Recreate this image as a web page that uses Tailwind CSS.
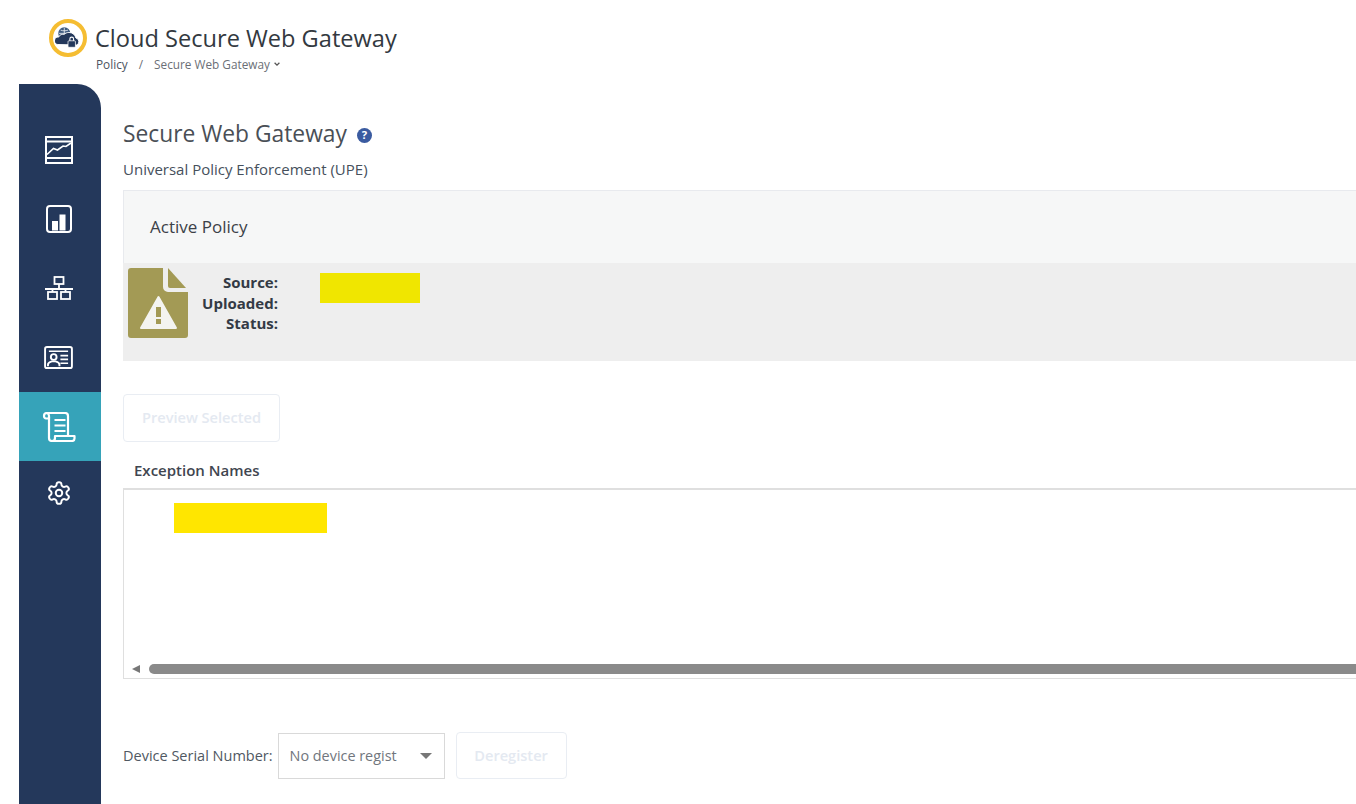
<!DOCTYPE html>
<html lang="en">
<head>
    <meta charset="UTF-8">
    <meta name="viewport" content="width=device-width, initial-scale=1.0">
    <title>Cloud Secure Web Gateway</title>
    <script src="https://cdn.jsdelivr.net/npm/@tailwindcss/browser@4"></script>
</head>
<body class="bg-white font-['Open_Sans',sans-serif] text-[#3b4351] h-[804px] w-[1356px] overflow-hidden">

    <!-- header -->
    <header class="h-[84px] flex pl-[49px] pt-[19px]">
        <div class="w-[38px] h-[38px] rounded-full border-[4px] border-[#f5bd32] flex items-center justify-center shrink-0">
            <svg viewBox="0 0 28 28" class="w-[26px] h-[26px]">
                <circle cx="10" cy="9" r="6.5" fill="#3d5a80"/>
                <path d="M4 9h12M10 3v12M6 5.500c2.500 1 5.500 1 8 0M6 12.500c2.500-1 5.500-1 8 0" stroke="#fff" stroke-width=".8" fill="none"/>
                <path d="M3 21a4 4 0 0 1 1-8c1-3 4-3 6-3 1-1 3-2 5-2 4 0 7 3 7.500 6a4 4 0 0 1 1 7.500z" fill="#24385b" stroke="#fff" stroke-width="1"/>
                <rect x="14" y="17" width="8" height="7" rx="1" fill="#24385b" stroke="#fff" stroke-width=".8"/>
                <path d="M16 17v-2a2 2 0 0 1 4 0v2" stroke="#fff" stroke-width="1.200" fill="none"/>
            </svg>
        </div>
        <div class="ml-[8px]">
            <h1 class="text-[23.600px] leading-[38px] text-[#33393f] whitespace-nowrap">Cloud Secure Web Gateway</h1>
            <div class="flex items-center text-[11.800px] leading-[16px] -mt-[1px] pl-[1px] text-[#6b6f76]">
                <span class="text-[#4d5460]">Policy</span>
                <span class="mx-[11px]">/</span>
                <span>Secure Web Gateway</span>
                <svg viewBox="0 0 10 10" class="w-[8px] h-[8px] ml-[3px]"><path d="M2 3.500l3 3 3-3" stroke="#555" stroke-width="1.600" fill="none"/></svg>
            </div>
        </div>
    </header>

    <div class="flex ml-[19px]">
        <!-- sidebar -->
        <nav class="w-[82px] h-[720px] shrink-0 bg-[#24385b] rounded-tr-[24px] pt-[31px] flex flex-col">
            <a class="h-[69px] flex items-center justify-center pr-[3px]">
                <svg viewBox="0 0 28 28" class="w-[28px] h-[28px]" fill="none" stroke="#fff" stroke-width="2">
                    <rect x="1" y="1" width="26" height="26"/>
                    <path d="M1 5.500h26M1 22h26"/>
                    <path d="M2 18.500l6.500-6 4 1.500 5.500-4 3 .5 5-3.500" stroke-width="1.600"/>
                </svg>
            </a>
            <a class="h-[69px] flex items-center justify-center pr-[3px]">
                <svg viewBox="0 0 26 28" class="w-[26px] h-[28px]" fill="none" stroke="#fff" stroke-width="2">
                    <rect x="1" y="1" width="24" height="26" rx="3"/>
                    <path fill="#fff" stroke="none" d="M6 16h6v9.500H6zM13.500 9.500h6v16h-6z"/>
                </svg>
            </a>
            <a class="h-[69px] flex items-center justify-center pr-[3px]">
                <svg viewBox="0 0 28 24" class="w-[28px] h-[24px]" fill="none" stroke="#fff" stroke-width="1.800">
                    <rect x="9.500" y="1" width="9" height="7"/>
                    <path d="M14 8v5M0 13h28M7.500 13v3M20.500 13v3"/>
                    <rect x="3" y="16" width="9" height="7"/>
                    <rect x="16" y="16" width="9" height="7"/>
                </svg>
            </a>
            <a class="h-[70px] flex items-center justify-center pr-[3px]">
                <svg viewBox="0 0 30 24" class="w-[29px] h-[23px]" fill="none" stroke="#fff" stroke-width="2">
                    <rect x="1" y="1" width="28" height="22" rx="2"/>
                    <path d="M5 5.500h20M17 10h8M17 14h8M17 18h8" stroke-width="1.700"/>
                    <circle cx="10" cy="11.500" r="3"/>
                    <path d="M4 21v-1.500c0-2 2-3 4-3.500h4c2 .5 4 1.500 4 3.500V21"/>
                </svg>
            </a>
            <a class="h-[69px] bg-[#36a3b9] flex items-center justify-center pr-[3px]">
                <svg viewBox="0 0 34 30" class="w-[34px] h-[30px]" fill="none" stroke="#fff" stroke-width="2.200" stroke-linejoin="round">
                    <path d="M5 1h18a3 3 0 0 1 3 3v20"/>
                    <path d="M5 1a3 3 0 0 0-3 3c0 1.500 1 2.500 2 2.500h3V4a3 3 0 0 0-2-3z"/>
                    <path d="M7 5v21a3 3 0 0 0 3 3h20a2.500 2.500 0 0 0 2.500-2.500V24H13v2a3 3 0 0 1-3 3"/>
                    <path d="M12.500 8h11M12.500 13.500h11M12.500 19h11"/>
                </svg>
            </a>
            <a class="h-[64px] flex items-center justify-center pr-[3px]">
                <svg viewBox="0 0 24 24" class="w-[26px] h-[26px]" fill="none" stroke="#fff" stroke-width="1.800" stroke-linecap="round" stroke-linejoin="round">
                    <path d="M12.220 2h-.44a2 2 0 0 0-2 2v.18a2 2 0 0 1-1 1.730l-.43.25a2 2 0 0 1-2 0l-.15-.08a2 2 0 0 0-2.730.73l-.22.380a2 2 0 0 0 .73 2.730l.15.100a2 2 0 0 1 1 1.720v.510a2 2 0 0 1-1 1.740l-.15.090a2 2 0 0 0-.73 2.730l.22.380a2 2 0 0 0 2.730.730l.15-.080a2 2 0 0 1 2 0l.43.250a2 2 0 0 1 1 1.730V20a2 2 0 0 0 2 2h.44a2 2 0 0 0 2-2v-.18a2 2 0 0 1 1-1.730l.43-.25a2 2 0 0 1 2 0l.15.080a2 2 0 0 0 2.730-.730l.22-.390a2 2 0 0 0-.73-2.730l-.15-.080a2 2 0 0 1-1-1.740v-.500a2 2 0 0 1 1-1.740l.15-.090a2 2 0 0 0 .73-2.730l-.22-.380a2 2 0 0 0-2.730-.730l-.15.080a2 2 0 0 1-2 0l-.43-.250a2 2 0 0 1-1-1.730V4a2 2 0 0 0-2-2z"/>
                    <circle cx="12" cy="12" r="3"/>
                </svg>
            </a>
        </nav>

        <!-- main -->
        <main class="flex-1 min-w-0 pl-[22px] pt-[33px]">
            <div class="flex items-center h-[34px]">
                <h2 class="text-[22.800px] leading-[34px] text-[#4a4f56] whitespace-nowrap">Secure Web Gateway</h2>
                <svg viewBox="0 0 16 16" class="w-[15px] h-[15px] ml-[10px] mt-[2px]">
                    <circle cx="8" cy="8" r="8" fill="#3a5ba0"/>
                    <text x="8" y="12" text-anchor="middle" font-size="12" font-weight="700" fill="#fff" font-family="Open Sans">?</text>
                </svg>
            </div>
            <p class="text-[15px] leading-[20px] mt-[8px] mb-[11px] text-[#46505c] whitespace-nowrap">Universal Policy Enforcement (UPE)</p>

            <section>
                <div class="h-[73px] bg-[#f6f7f7] border-t border-l border-[#e8eaee] flex items-center pl-[26px] text-[17px] text-[#3c4148]">Active Policy</div>
                <div class="h-[98px] bg-[#eeeeee] flex pl-[5px] pt-[5px]">
                    <svg viewBox="0 0 60 70" class="w-[60px] h-[70px] shrink-0">
                        <path d="M3 0h32v19a5 5 0 0 0 5 5h20v43a3 3 0 0 1-3 3H3a3 3 0 0 1-3-3V3a3 3 0 0 1 3-3z" fill="#a39a55"/>
                        <path d="M40 0l18 20H42a2 2 0 0 1-2-2z" fill="#a39a55"/>
                        <path d="M30.500 29L48 60H13z" fill="#f4f4f0" stroke="#f4f4f0" stroke-width="2" stroke-linejoin="round"/>
                        <rect x="28" y="39" width="5" height="10" fill="#a39a55"/>
                        <rect x="28" y="51" width="5" height="5" fill="#a39a55"/>
                    </svg>
                    <dl class="w-[90px] text-right text-[15px] leading-[20.500px] font-bold text-[#333a45] pt-[4px]">
                        <dt>Source:</dt>
                        <dt>Uploaded:</dt>
                        <dt>Status:</dt>
                    </dl>
                    <div class="w-[100px] h-[30px] bg-[#f0e600] ml-[42px] mt-[5px]"></div>
                </div>
            </section>

            <button class="block mt-[33px] w-[157px] h-[48px] border border-[#e9edf3] rounded-[4px] text-[14.600px] font-semibold text-[#e4e9f1]">Preview Selected</button>

            <h3 class="text-[15px] leading-[20px] font-semibold text-[#3f4650] pl-[11px] mt-[18px]">Exception Names</h3>

            <div class="mt-[8px] h-[191px] border-2 border-r-0 border-[#dfdfdf] border-b border-l relative flex flex-col justify-between">
                <div class="w-[153px] h-[30px] bg-[#ffe600] ml-[50px] mt-[13px]"></div>
                <div class="flex items-center h-[10px] mb-[4px] pl-[8px]">
                    <span class="w-0 h-0 border-y-[4px] border-y-transparent border-r-[8px] border-r-[#777] mr-[9px]"></span>
                    <div class="flex-1 h-[10px] bg-[#8a8a8a] rounded-l-[5px]"></div>
                </div>
            </div>

            <div class="flex items-center mt-[53px]">
                <span class="text-[14.500px] text-[#505862] whitespace-nowrap">Device Serial Number:</span>
                <div class="w-[167px] h-[46px] ml-[5px] border border-[#d9d9d9] flex items-center justify-between pl-[11px] pr-[12px] text-[14.400px] text-[#71767d]">
                    <span>No device regist</span>
                    <span class="w-0 h-0 border-x-[6px] border-x-transparent border-t-[6px] border-t-[#777]"></span>
                </div>
                <button class="w-[111px] h-[47px] ml-[11px] border border-[#e9edf3] rounded-[4px] text-[14.600px] font-semibold text-[#e4e9f1]">Deregister</button>
            </div>
        </main>
    </div>
</body>
</html>
